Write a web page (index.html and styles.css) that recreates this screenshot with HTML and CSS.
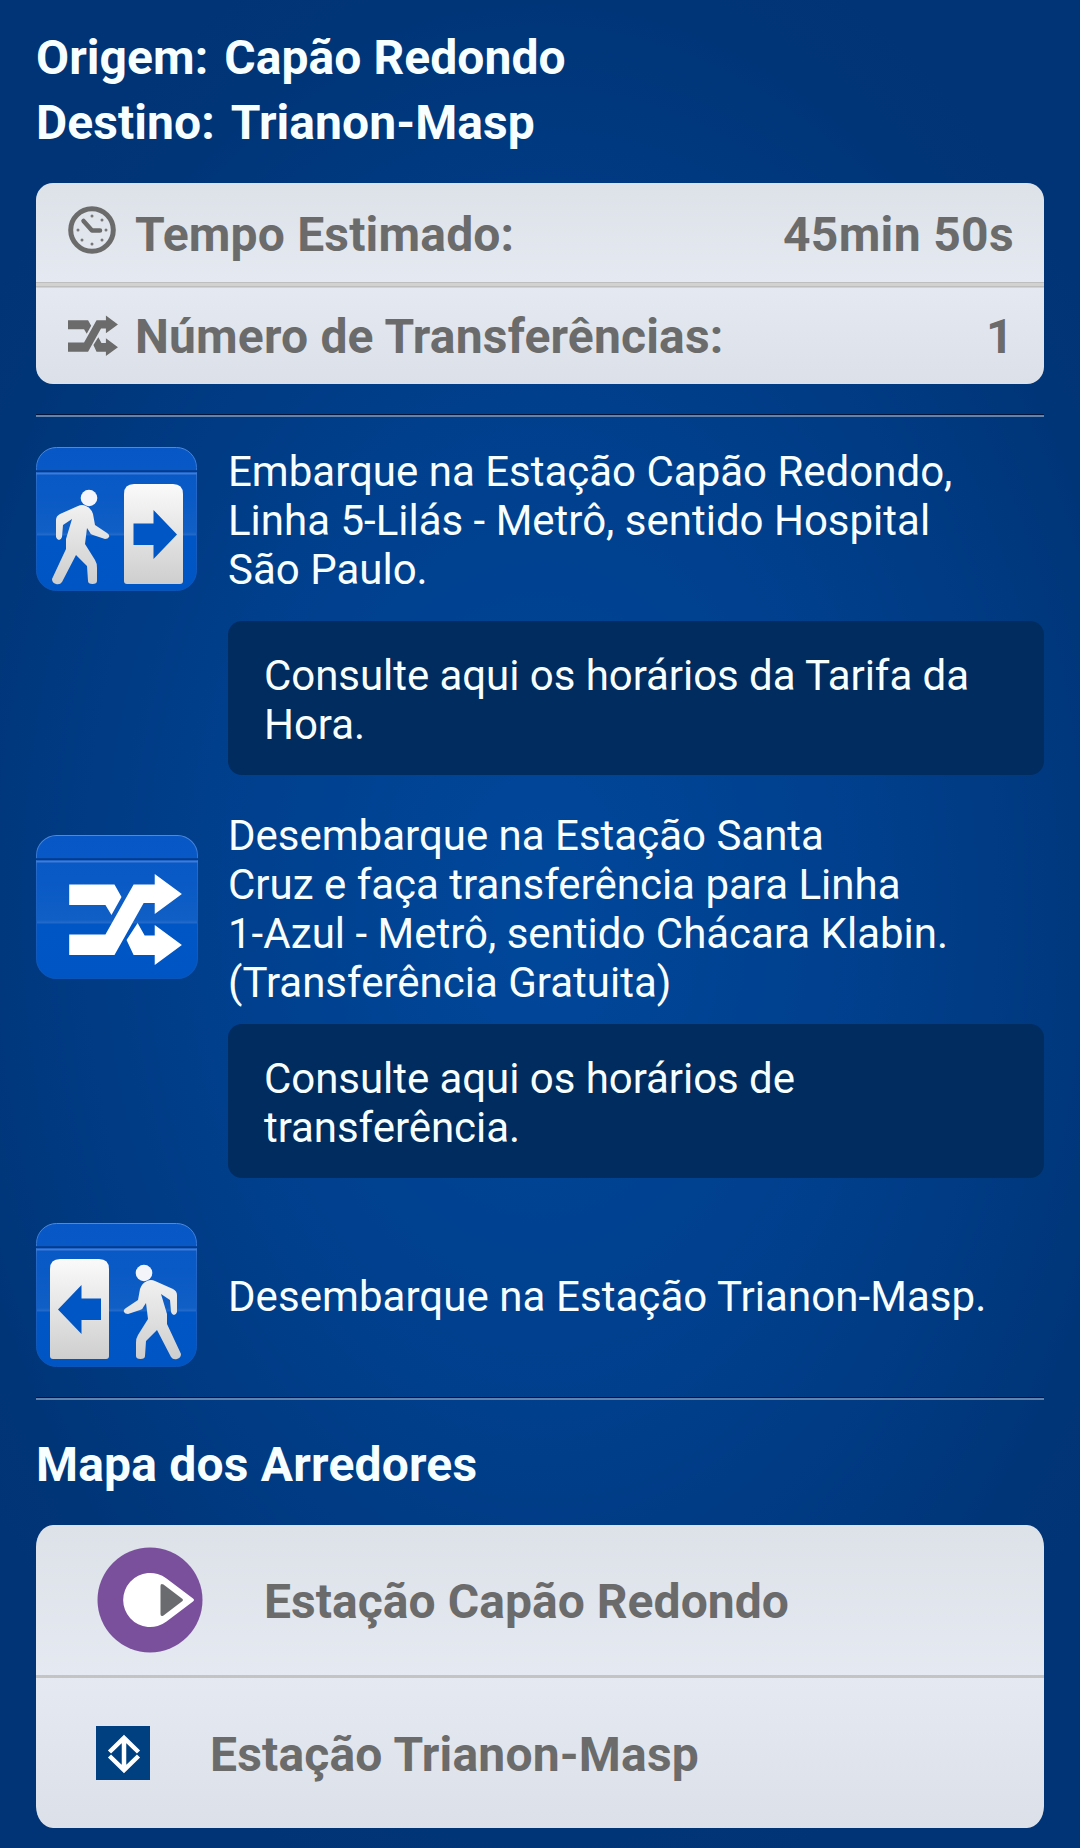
FILE: index.html
```html
<!DOCTYPE html>
<html lang="pt-BR">
<head>
<meta charset="utf-8">
<title>Trajeto</title>
<link rel="stylesheet" href="styles.css">
</head>
<body>
<svg class="defs" aria-hidden="true">
  <defs>
    <linearGradient id="tile" x1="0" y1="0" x2="0" y2="1">
      <stop offset="0" stop-color="#0757c6"/><stop offset=".3" stop-color="#0959c6"/><stop offset=".59" stop-color="#105fc5"/><stop offset=".61" stop-color="#2269cb"/><stop offset=".62" stop-color="#0056c4"/><stop offset="1" stop-color="#0055c4"/>
    </linearGradient>
    <linearGradient id="rim" x1="0" y1="0" x2="0" y2="1">
      <stop offset="0" stop-color="#4c8ae0"/><stop offset=".25" stop-color="#2468c8"/><stop offset="1" stop-color="#0b55b8"/>
    </linearGradient>
    <linearGradient id="silver" gradientUnits="userSpaceOnUse" x1="0" y1="37" x2="0" y2="137">
      <stop offset="0" stop-color="#fafafa"/><stop offset="1" stop-color="#cecece"/>
    </linearGradient>
    <g id="base">
      <rect x=".5" y=".5" width="160" height="143" rx="20" fill="url(#tile)" stroke="url(#rim)"/>
      <path d="M0 24.3h161" stroke="#003b8c" stroke-width="2"/>
      <path d="M0 26.6h161" stroke="#3c7dd5" stroke-width="2"/>
    </g>
    <g id="walker" fill="url(#silver)">
      <circle cx="53" cy="51" r="8.3" fill="#f3f5fa"/>
      <path d="M42 59q4-2 8 0 5 2 7 8l2 11 12 8q3 2 2 4t-4 2l-12-4q-3-1-4-4l-2-3-2 16 10 16q2 3 2 8v13q0 3-4.500 3t-4.500-3l-1-15-11-11-14 27q-2 3-6 2t-4-5l14-30V92l6-20-9 6-1 12q-1 3-3 3t-3-3V73q0-4 4-6z"/>
    </g>
    <path id="shuffle" d="M0 10.500H45L52 23 42 41 36 31H0ZM0 60.500H36L64 10.500H85V0L112 20 85 40V29H74L45 81H0ZM57 66 68 49 75 61.500H85V51L112 71 85 91V81H64Z"/>
  </defs>
</svg>
<main class="page">
  <header class="trip">
    <p class="trip-line"><span>Origem:</span><span>Capão Redondo</span></p>
    <p class="trip-line"><span>Destino:</span><span>Trianon-Masp</span></p>
  </header>

  <section class="card summary">
    <div class="summary-row">
      <svg class="summary-icon" viewBox="0 0 50 50">
        <g fill="none" stroke="#6b6b6b">
          <circle cx="24" cy="24" r="21.300" stroke-width="5"/>
          <path d="M15.500 15l8.500 9.500h8" stroke-width="4.500" stroke-linecap="round" stroke-linejoin="round"/>
        </g>
        <g fill="#777"><circle cx="24" cy="10" r="1.500"/><circle cx="34" cy="14" r="1.500"/><circle cx="38" cy="24" r="1.500"/><circle cx="34" cy="34" r="1.500"/><circle cx="24" cy="38" r="1.500"/><circle cx="14" cy="34" r="1.500"/><circle cx="10" cy="24" r="1.500"/></g>
      </svg>
      <span>Tempo Estimado:</span><span class="value">45min 50s</span>
    </div>
    <div class="summary-row">
      <svg class="summary-icon" viewBox="0 0 50 50"><use href="#shuffle" fill="#6b6b6b" transform="translate(0 3.500) scale(.446)"/></svg>
      <span>Número de Transferências:</span><span class="value">1</span>
    </div>
  </section>

  <section class="route">
    <div class="step step-board">
      <svg class="step-icon" viewBox="0 0 161 144">
        <use href="#base"/>
        <use href="#walker"/>
        <path d="M88 134V47q0-10 10-10h39q10 0 10 10v87q0 3-3 3H91q-3 0-3-3z" fill="url(#silver)"/>
        <path d="M97.500 76.500h20V63L141 87.500 117.500 112V98h-20z" fill="#0056c4"/>
      </svg>
      <p>Embarque na Estação Capão Redondo,<br>Linha 5-Lilás - Metrô, sentido Hospital<br>São Paulo.</p>
    </div>
    <a class="notice notice-fare">Consulte aqui os horários da Tarifa da<br>Hora.</a>
    <div class="step step-transfer">
      <svg class="step-icon wide" viewBox="0 0 161 144" preserveAspectRatio="none">
        <use href="#base"/>
        <use href="#shuffle" fill="#fff" transform="translate(33 39)"/>
      </svg>
      <p>Desembarque na Estação Santa<br>Cruz e faça transferência para Linha<br>1-Azul - Metrô, sentido Chácara Klabin.<br>(Transferência Gratuita)</p>
    </div>
    <a class="notice notice-transfer">Consulte aqui os horários de<br>transferência.</a>
    <div class="step step-leave">
      <svg class="step-icon" viewBox="0 0 161 144">
        <use href="#base"/>
        <use href="#walker" transform="translate(161 -1) scale(-1 1)"/>
        <path d="M14 133V46q0-10 10-10h39q10 0 10 10v87q0 3-3 3H17q-3 0-3-3z" fill="url(#silver)"/>
        <path d="M65 75.500H45.500V62L22 86.500 45.500 111V97H65z" fill="#0056c4"/>
      </svg>
      <p>Desembarque na Estação Trianon-Masp.</p>
    </div>
  </section>

  <h2 class="heading">Mapa dos Arredores</h2>
  <section class="card stations">
    <div class="station station-lilac">
      <svg class="line-lilac" viewBox="0 0 106 106">
        <circle cx="53" cy="53" r="52.500" fill="#7a509d"/>
        <path d="M69.500 31.500 96 51.500q2 1.500 0 3L69.500 74.500A27 27 0 1 1 69.500 31.500Z" fill="#fff"/>
        <path d="M63.500 39v28q0 3 3 1.500L85.500 54q1-1 0-2L66.500 37.500q-3-1.500-3 1.500z" fill="#696b6e"/>
      </svg>
      <span>Estação Capão Redondo</span>
    </div>
    <div class="station station-blue">
      <svg class="line-blue" viewBox="0 0 54 54">
        <path d="M0 0h54v54H0z" fill="#004080"/>
        <path d="M28 12v32M13.500 26 28 12 42.500 26M13.500 30 28 44 42.500 30" fill="none" stroke="#fff" stroke-width="4.500"/>
      </svg>
      <span>Estação Trianon-Masp</span>
    </div>
  </section>
</main>
</body>
</html>
```
FILE: styles.css
```css
* { box-sizing: border-box; }
body, p, h2 { margin: 0; }
body { background: #003478; }
.defs { display: block; width: 0; height: 0; }

.page {
  width: 1080px;
  height: 1848px;
  padding: 25px 36px 0;
  overflow: hidden;
  background: radial-gradient(ellipse 680px 1020px at 50% 49%, #00479b 0%, #003f8c 50%, #003577 92%, #003476 100%);
  color: #f8ffff;
  font: 42px/49px Roboto, sans-serif;
}

.trip, .heading, .card { font-size: 48px; font-weight: 700; }
.trip { letter-spacing: .06px; }
.trip-line { display: flex; gap: 16px; line-height: 65px; }

.card {
  overflow: hidden;
  border-radius: 17px;
  background: linear-gradient(#dde1e8, #e5eaf2 50%, #dce0e8);
  color: #6b6b6b;
}

.summary { margin-top: 28px; height: 201px; letter-spacing: .18px; }
.summary-row {
  display: flex;
  align-items: center;
  height: 99px;
  padding: 4px 30px 0 32px;
}
.summary-row + .summary-row {
  height: 102px;
  padding-top: 2px;
  background: linear-gradient(#bebebe 1px, #d2d2d1 1px 2px, #d2d2d1 4px, #bebebe 4px 5px, #d2d2d1 5px 6px, transparent 6px);
  padding-top: 7px;
}
.summary-icon { width: 50px; height: 50px; margin-right: 17px; }
.summary-row:first-child .summary-icon { margin-top: -8px; }
.value { margin-left: auto; letter-spacing: .35px; }

.route {
  margin-top: 30px;
  padding-top: 30px;
  border-top: 1px solid #00153c;
  border-bottom: 2px solid #6283ae;
  box-shadow: inset 0 2px #6283ae, inset 0 -1px #00153c;
  height: 986px;
}
.step { display: flex; align-items: center; gap: 31px; }
.step-icon { flex: none; width: 161px; height: 144px; }
.step-icon.wide { width: 162px; margin: -4px -1px 0 0; }
.step-board { padding-top: 2px; align-items: flex-start; }
.notice {
  display: block;
  margin-left: 192px;
  height: 154px;
  padding: 30px 36px;
  border-radius: 14px;
  background: #002c60;
  letter-spacing: -.05px;
}
.notice-fare { margin-top: 27px; }
.step-transfer { margin-top: 36px; }
.notice-transfer { margin-top: 17px; }
.step-leave { margin-top: 45px; letter-spacing: .06px; }
.step-leave p { padding-top: 2px; }

.heading { margin-top: 36px; line-height: 58px; letter-spacing: .2px; }

.stations { margin-top: 31px; height: 303px; border-radius: 17px / 22px; }
.station {
  display: flex;
  align-items: center;
  height: 150px;
  padding-left: 61px;
}
.station-lilac { letter-spacing: .05px; }
.station-lilac span { padding-top: 2px; }
.station-blue {
  height: 153px;
  padding-left: 60px;
  border-top: 3px solid #c4c4c5;
  letter-spacing: .18px;
}
.station-blue span { padding-top: 3px; }
.line-lilac { width: 106px; height: 106px; margin-right: 61px; }
.line-blue { width: 54px; height: 54px; margin-right: 60px; }
```
